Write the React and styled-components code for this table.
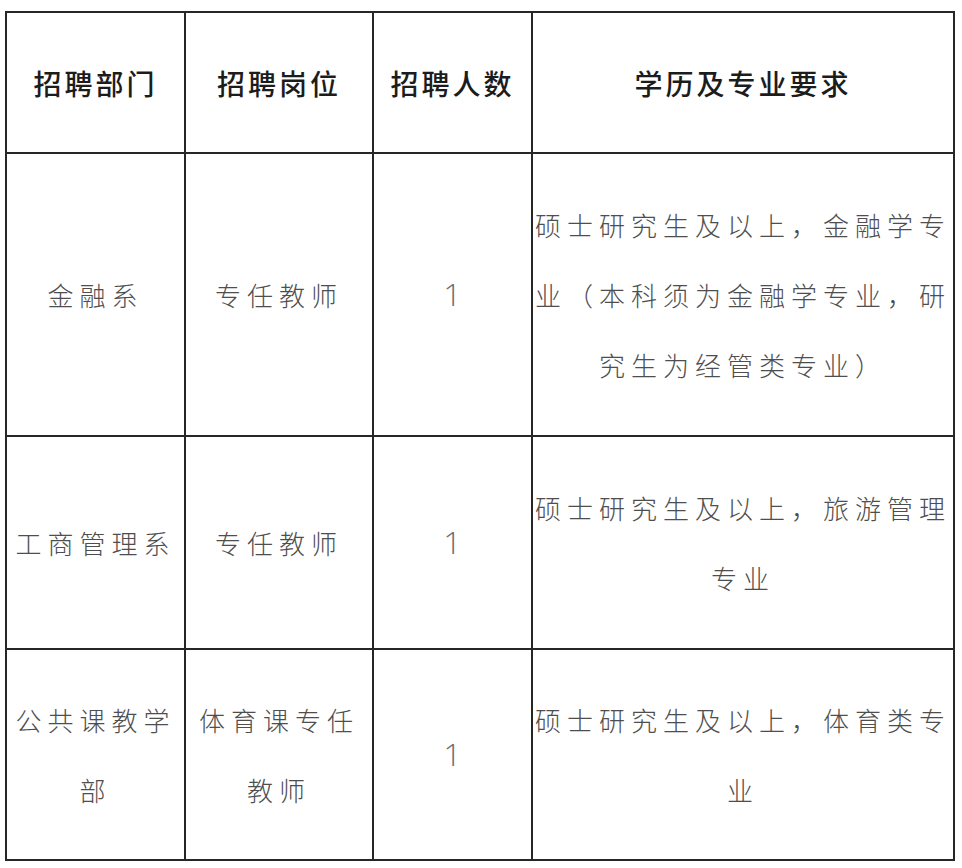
import React from "react";
import styled, { createGlobalStyle } from "styled-components";

const GlobalStyle = createGlobalStyle`
  html, body {
    margin: 0;
    padding: 0;
    background: #ffffff;
  }
  body {
    font-family: "Noto Sans CJK SC", "Noto Sans", sans-serif;
  }
`;

// page wrapper puts the table where the scan sits
const Page = styled.div`
  padding: 11px 9px 9px 5px;
`;

const Table = styled.table`
  width: 948px;
  border-collapse: collapse;
  table-layout: fixed;
`;

const Row = styled.tr`
  height: ${(props) => props.$h}px;
`;

const HeadCell = styled.th`
  border: 2px solid #262626;
  padding: 0;
  text-align: center;
  vertical-align: middle;
  font-size: 28px;
  font-weight: 500;
  letter-spacing: 3px;
  color: #1c1c1c;
`;

const Cell = styled.td`
  border: 2px solid #262626;
  padding: 0;
  text-align: center;
  vertical-align: middle;
  font-size: 26px;
  font-weight: 300;
  line-height: 70px;
  letter-spacing: 6px;
  color: #4e4e4e;
`;

const Count = styled.span`
  font-family: "Open Sans", "Liberation Sans", Arial, sans-serif;
  font-size: 32px;
  font-weight: 300;
  letter-spacing: 0;
  color: #6e6e6e;
`;

const columns = [179, 188, 159, 422];

const headers = ["招聘部门", "招聘岗位", "招聘人数", "学历及专业要求"];

const rows = [
  {
    height: 283,
    dept: "金融系",
    post: "专任教师",
    count: 1,
    req: "硕士研究生及以上，金融学专业（本科须为金融学专业，研究生为经管类专业）",
  },
  {
    height: 213,
    dept: "工商管理系",
    post: "专任教师",
    count: 1,
    req: "硕士研究生及以上，旅游管理专业",
  },
  {
    height: 211,
    dept: "公共课教学部",
    post: "体育课专任教师",
    count: 1,
    req: "硕士研究生及以上，体育类专业",
  },
];

export default function App() {
  return (
    <>
      <GlobalStyle />
      <Page>
        <Table>
          <colgroup>
            {columns.map((w, i) => (
              <col key={i} style={{ width: w }} />
            ))}
          </colgroup>
          <thead>
            <Row $h={141}>
              {headers.map((h) => (
                <HeadCell key={h}>{h}</HeadCell>
              ))}
            </Row>
          </thead>
          <tbody>
            {rows.map((r) => (
              <Row key={r.dept} $h={r.height}>
                <Cell>{r.dept}</Cell>
                <Cell>{r.post}</Cell>
                <Cell>
                  <Count>{r.count}</Count>
                </Cell>
                <Cell>{r.req}</Cell>
              </Row>
            ))}
          </tbody>
        </Table>
      </Page>
    </>
  );
}
